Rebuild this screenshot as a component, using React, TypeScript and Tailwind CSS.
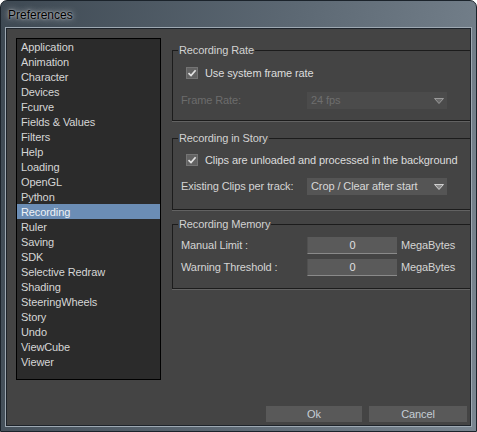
import type { ReactNode } from 'react';

const categories = [
    'Application',
    'Animation',
    'Character',
    'Devices',
    'Fcurve',
    'Fields & Values',
    'Filters',
    'Help',
    'Loading',
    'OpenGL',
    'Python',
    'Recording',
    'Ruler',
    'Saving',
    'SDK',
    'Selective Redraw',
    'Shading',
    'SteeringWheels',
    'Story',
    'Undo',
    'ViewCube',
    'Viewer',
];

function CheckBox() {
    return (
        <span className="flex h-[12px] w-[12px] shrink-0 items-center justify-center border border-[#747474] bg-[#626262]">
            <svg width="10" height="10" viewBox="0 0 10 10">
                <path d="M1.5 5.2 L4 7.6 L8.6 2.2" fill="none" stroke="#e2e2e2" strokeWidth="1.7" />
            </svg>
        </span>
    );
}

function Arrow({ dim }: { dim?: boolean }) {
    return (
        <svg width="10" height="6" viewBox="0 0 10 6" className="ml-auto mr-[3px]">
            <path d="M0.5 0.5 H9.5 L5 5.5 Z" fill={dim ? '#6a6a6a' : '#8a8a8a'} stroke={dim ? '#9a9a9a' : '#d0d0d0'} strokeWidth="1" />
        </svg>
    );
}

function Group({ title, className, children }: { title: string; className: string; children: ReactNode }) {
    return (
        <fieldset className={`w-[310px] border border-[#1c1c1c] p-0 shadow-[0_1px_0_#626262] ${className}`}>
            <legend className="ml-[5px] px-[1px] text-[11px] leading-[14px] text-[#d2d2d2]">{title}</legend>
            {children}
        </fieldset>
    );
}

export default function App() {
    return (
        <div className="flex h-[432px] w-[477px] flex-col rounded-t-[7px] border border-[#1b232b] bg-[linear-gradient(100deg,#3e4953_0%,#5d6974_55%,#7a8691_100%)] px-[5px] pb-[5px] font-['Liberation_Sans',Arial,sans-serif]">
            {/* Title bar */}
            <div className="flex h-[27px] shrink-0 items-center pl-[2px]">
                <span className="text-[12px] text-black [text-shadow:0_0_6px_rgba(255,255,255,0.85),0_0_2px_rgba(255,255,255,0.6)]">
                    Preferences
                </span>
            </div>

            {/* Client area */}
            <div className="flex flex-1 flex-col overflow-hidden border border-[#1d232a] bg-[#444444] tracking-[-0.1px] shadow-[0_0_0_1px_#9ea9b3]">
                <div className="flex h-[351px] shrink-0">
                    {/* Category list */}
                    <div className="ml-[9px] mt-[9px] h-[342px] w-[145px] shrink-0 border border-black bg-[#2b2b2b]">
                        {categories.map((name) => (
                            <div
                                key={name}
                                className={`h-[15px] pl-[4px] text-[11px] leading-[17px] ${
                                    name === 'Recording' ? 'bg-[#6b8db5] text-[#eef2f6]' : 'text-[#d6d6d6]'
                                }`}
                            >
                                {name}
                            </div>
                        ))}
                    </div>

                    {/* Settings */}
                    <div className="ml-[11px] flex flex-col pt-[14px] text-[11px] text-[#d4d4d4]">
                        <Group title="Recording Rate" className="h-[78px]">
                            <div className="pl-[13px] pt-[10px]">
                                <div className="flex h-[12px] items-center gap-[7px]">
                                    <CheckBox />
                                    <span className="text-[#dcdcdc]">Use system frame rate</span>
                                </div>
                            </div>
                            <div className="mt-[13px] flex items-center pl-[8px]">
                                <span className="w-[126px] text-[#6c6c6c]">Frame Rate:</span>
                                <div className="flex h-[17px] w-[140px] items-center bg-[#4b4b4b] pl-[4px] text-[#6e6e6e]">
                                    24 fps
                                    <Arrow dim />
                                </div>
                            </div>
                        </Group>

                        <Group title="Recording in Story" className="mt-[10px] h-[79px]">
                            <div className="pl-[13px] pt-[9px]">
                                <div className="flex h-[12px] items-center gap-[7px]">
                                    <CheckBox />
                                    <span className="text-[#dcdcdc]">Clips are unloaded and processed in the background</span>
                                </div>
                            </div>
                            <div className="mt-[12px] flex items-center pl-[8px]">
                                <span className="w-[126px]">Existing Clips per track:</span>
                                <div className="flex h-[17px] w-[140px] items-center bg-[#555555] pl-[4px] text-[#d8d8d8]">
                                    Crop / Clear after start
                                    <Arrow />
                                </div>
                            </div>
                        </Group>

                        <Group title="Recording Memory" className="mt-[7px] h-[72px]">
                            <div className="flex flex-col gap-[5px] pl-[8px] pt-[6px]">
                                {['Manual Limit :', 'Warning Threshold :'].map((label) => (
                                    <div key={label} className="flex h-[17px] items-center">
                                        <span className="w-[126px]">{label}</span>
                                        <div className="flex h-[17px] w-[90px] items-center justify-center border-b border-l border-b-[#8a8a8a] border-l-[#505050] bg-[#5a5a5a] pt-[1px] text-[#e0e0e0]">
                                            0
                                        </div>
                                        <span className="ml-[4px]">MegaBytes</span>
                                    </div>
                                ))}
                            </div>
                        </Group>
                    </div>
                </div>

                {/* Buttons */}
                <div className="mt-[26px] flex justify-end gap-[7px] pr-[3px]">
                    <button className="h-[16px] w-[96px] bg-[#595959] text-[11px] leading-[16px] text-[#c6ced6]">Ok</button>
                    <button className="h-[16px] w-[98px] bg-[#595959] text-[11px] leading-[16px] text-[#c6ced6]">Cancel</button>
                </div>
            </div>
        </div>
    );
}
